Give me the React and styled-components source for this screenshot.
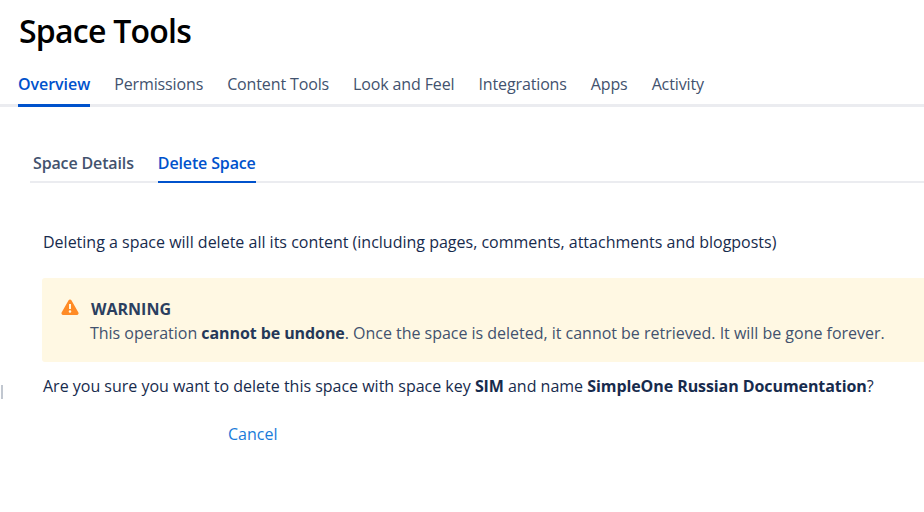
import React from 'react';
import styled, { createGlobalStyle } from 'styled-components';

const GlobalStyle = createGlobalStyle`
  html, body {
    margin: 0;
    background: #fff;
    overflow: hidden;
  }
  body {
    font-family: "Open Sans", "Noto Sans", sans-serif;
    color: #172b4d;
  }
`;

const NAV_ITEMS = ['Overview', 'Permissions', 'Content Tools', 'Look and Feel', 'Integrations', 'Apps', 'Activity'];

const WarningIcon = () => (
  <svg width="18" height="16" viewBox="0 0 18 16" aria-hidden="true">
    <path
      fillRule="evenodd"
      fill="#ff8b26"
      d="M7.6 1.2c.6-1.1 2.2-1.1 2.8 0l7 12.4c.6 1.1-.2 2.4-1.4 2.4H2c-1.2 0-2-1.3-1.4-2.4zM8 5v5h2V5zm1 6.2a1.3 1.3 0 1 0 0 2.6 1.3 1.3 0 0 0 0-2.6z"
    />
  </svg>
);

const App = () => {
  return (
    <Page>
      <GlobalStyle />
      <Title>Space Tools</Title>
      <MainTabs>
        {NAV_ITEMS.map((item, i) => (
          <MainTab key={item} $active={i === 0}>{item}</MainTab>
        ))}
      </MainTabs>

      <Content>
        <SubTabs>
          <SubTab>Space Details</SubTab>
          <SubTab $active>Delete Space</SubTab>
        </SubTabs>

        <Body>
          <Intro>Deleting a space will delete all its content (including pages, comments, attachments and blogposts)</Intro>
          <Warning>
            <IconSlot><WarningIcon /></IconSlot>
            <div>
              <WarningTitle>WARNING</WarningTitle>
              <WarningText>
                This operation <strong>cannot be undone</strong>. Once the space is deleted, it cannot be retrieved. It will be gone forever.
              </WarningText>
            </div>
          </Warning>
          <Question>
            Are you sure you want to delete this space with space key <strong>SIM</strong> and name <strong>SimpleOne Russian Documentation</strong>?
          </Question>
          <Actions>
            <CancelLink href="#">Cancel</CancelLink>
          </Actions>
        </Body>
      </Content>
      <EdgeMark />
    </Page>
  );
};

const Page = styled.div`
  position: relative;
  width: 924px;
  height: 512px;
  overflow: hidden;
`;

const Title = styled.h1`
  margin: 0;
  padding: 9px 0 0 19px;
  font-size: 32px;
  line-height: 44px;
  font-weight: 600;
  color: #000;
  letter-spacing: -0.75px;
`;

const MainTabs = styled.nav`
  display: flex;
  gap: 24px;
  margin-top: 7px;
  padding-left: 18px;
  height: 47px;
  box-sizing: border-box;
  border-bottom: 3px solid #ebecf0;
`;

const MainTab = styled.a`
  height: 47px;
  box-sizing: border-box;
  padding-top: 13px;
  font-size: 16px;
  line-height: 22px;
  letter-spacing: ${(p) => (p.$active ? '-0.04px' : '-0.13px')};
  white-space: nowrap;
  font-weight: ${(p) => (p.$active ? 600 : 400)};
  color: ${(p) => (p.$active ? '#0052cc' : '#42526e')};
  border-bottom: 3px solid ${(p) => (p.$active ? '#0052cc' : 'transparent')};
`;

const Content = styled.div`
  padding: 0 0 0 30px;
`;

const SubTabs = styled.div`
  display: flex;
  gap: 24px;
  margin-top: 39px;
  padding-left: 3px;
  height: 37px;
  box-sizing: border-box;
  border-bottom: 2px solid #ebecf0;
`;

const SubTab = styled.a`
  height: 37px;
  box-sizing: border-box;
  padding-top: 6px;
  font-size: 16px;
  line-height: 22px;
  font-weight: 600;
  letter-spacing: -0.14px;
  white-space: nowrap;
  color: ${(p) => (p.$active ? '#0052cc' : '#42526e')};
  border-bottom: 2px solid ${(p) => (p.$active ? '#0052cc' : 'transparent')};
`;

const Body = styled.div`
  padding: 48px 0 0 12px;
  font-size: 16px;
  line-height: 22px;
  white-space: nowrap;

  strong {
    font-weight: 700;
    letter-spacing: -0.08px;
  }
`;

const Intro = styled.p`
  margin: 0 0 0 1px;
`;

const Warning = styled.div`
  display: flex;
  gap: 12px;
  margin-top: 25px;
  padding: 20px 16px 16px 19px;
  height: 84px;
  box-sizing: border-box;
  background: #fff8e3;
  border-radius: 3px 0 0 3px;
  color: #42526e;
`;

const IconSlot = styled.div`
  display: flex;
  padding-top: 1px;
  height: 20px;
`;

const WarningTitle = styled.div`
  font-weight: 700;
  color: #2b3f60;
`;

const WarningText = styled.div`
  margin-left: -1px;
  margin-top: 2px;
  letter-spacing: -0.02px;

  strong {
    color: #253858;
  }
`;

const Question = styled.p`
  margin: 13px 0 0 1px;
  letter-spacing: -0.01px;
`;

const Actions = styled.div`
  margin-top: 26px;
  padding-left: 186px;
`;

const CancelLink = styled.a`
  color: #1a7bd9;
  text-decoration: none;
`;

const EdgeMark = styled.div`
  position: absolute;
  left: 1px;
  top: 385px;
  width: 2px;
  height: 14px;
  background: #c1c7d0;
`;

export default App;
